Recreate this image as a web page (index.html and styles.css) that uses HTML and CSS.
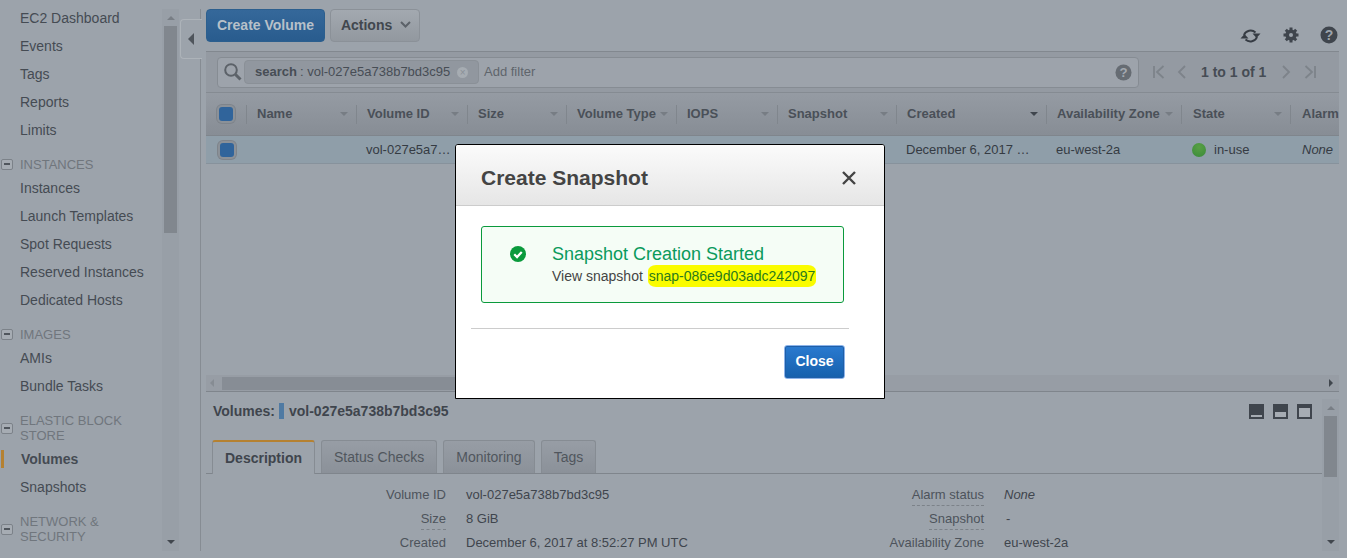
FILE: index.html
```html
<!DOCTYPE html>
<html lang="en">
<head>
<meta charset="utf-8">
<title>Volumes</title>
<link rel="stylesheet" href="styles.css">
</head>
<body>
<div class="page">
  <aside class="sidebar">
    <nav class="nav">
      <a class="item">EC2 Dashboard</a>
      <a class="item">Events</a>
      <a class="item">Tags</a>
      <a class="item">Reports</a>
      <a class="item">Limits</a>
      <div class="section"><span class="minus"></span><span class="section-label">INSTANCES</span></div>
      <a class="item">Instances</a>
      <a class="item">Launch Templates</a>
      <a class="item">Spot Requests</a>
      <a class="item">Reserved Instances</a>
      <a class="item">Dedicated Hosts</a>
      <div class="section"><span class="minus"></span><span class="section-label">IMAGES</span></div>
      <a class="item">AMIs</a>
      <a class="item">Bundle Tasks</a>
      <div class="section two"><span class="minus"></span><span class="section-label">ELASTIC BLOCK<br>STORE</span></div>
      <a class="item active">Volumes</a>
      <a class="item">Snapshots</a>
      <div class="section two"><span class="minus"></span><span class="section-label">NETWORK &amp;<br>SECURITY</span></div>
    </nav>
    <div class="vscroll side-scroll">
      <span class="arrow-up"></span>
      <span class="thumb side-thumb"></span>
      <span class="arrow-down"></span>
    </div>
    <div class="collapse-col">
      <div class="collapse-tab"><span class="arrow-left"></span></div>
    </div>
  </aside>

  <main class="main">
    <div class="toolbar">
      <button class="btn primary">Create Volume</button>
      <button class="btn secondary">Actions
        <svg class="chev" width="11" height="7" viewBox="0 0 11 7"><path d="M1 1l4.500 4.500L10 1" fill="none" stroke="#5c6269" stroke-width="2"/></svg>
      </button>
      <div class="tool-icons">
        <svg class="ic-refresh" width="21" height="16" viewBox="0 0 21 16"><path d="M4 7A7 6.500 0 0 1 15.500 4.500M17 9A7 6.500 0 0 1 5.500 11.500" fill="none" stroke="#363c44" stroke-width="2"/><path d="M12.500 5.500h8l-4 4.500zM.5 10.500h8l-4-4.500z" fill="#363c44"/></svg>
        <svg width="16" height="16" viewBox="0 0 16 16"><circle cx="8" cy="8" r="5.600" fill="#3f454d"/><path d="M8 .5v15M.5 8h15M2.800 2.800l10.400 10.400M13.200 2.800L2.800 13.200" stroke="#3f454d" stroke-width="3"/><circle cx="8" cy="8" r="2" fill="#9ca3ab"/></svg>
        <svg class="ic-help" width="18" height="18" viewBox="0 0 18 18"><circle cx="9" cy="9" r="8.500" fill="#3f454d"/><text x="9" y="14" class="q-mark">?</text></svg>
      </div>
    </div>

    <div class="table-panel">
      <div class="filter-bar">
        <div class="search">
          <svg width="20" height="20" viewBox="0 0 20 20"><circle cx="8" cy="8" r="5.800" fill="none" stroke="#5c6269" stroke-width="2"/><path d="M12.500 12.500l5 5" stroke="#5c6269" stroke-width="3"/></svg>
          <span class="token"><b>search</b> : vol-027e5a738b7bd3c95<span class="token-x">×</span></span>
          <span class="add-filter">Add filter</span>
          <svg class="search-help" width="17" height="17" viewBox="0 0 18 18"><circle cx="9" cy="9" r="8.500" fill="#666c73"/><text x="9" y="14" class="q-mark light">?</text></svg>
        </div>
        <div class="pager">
          <svg width="12" height="14" viewBox="0 0 12 14"><path d="M1 1v12M10.500 1L4 7l6.500 6" fill="none" stroke="#7d838a" stroke-width="1.800"/></svg>
          <svg class="pg-prev" width="9" height="14" viewBox="0 0 9 14"><path d="M8 1L2 7l6 6" fill="none" stroke="#7d838a" stroke-width="1.800"/></svg>
          <span class="pg-text">1 to 1 of 1</span>
          <svg class="pg-next" width="9" height="14" viewBox="0 0 9 14"><path d="M1 1l6 6-6 6" fill="none" stroke="#7d838a" stroke-width="1.800"/></svg>
          <svg width="12" height="14" viewBox="0 0 12 14"><path d="M11 1v12M1.500 1L8 7l-6.500 6" fill="none" stroke="#7d838a" stroke-width="1.800"/></svg>
        </div>
      </div>

      <div class="grid head">
        <div class="cell-check"><span class="check"></span></div>
        <div class="hcell"><span>Name</span><i class="sort"></i></div>
        <div class="hcell"><span>Volume ID</span><i class="sort"></i></div>
        <div class="hcell"><span>Size</span><i class="sort"></i></div>
        <div class="hcell"><span>Volume Type</span><i class="sort"></i></div>
        <div class="hcell"><span>IOPS</span><i class="sort"></i></div>
        <div class="hcell"><span>Snapshot</span><i class="sort"></i></div>
        <div class="hcell"><span>Created</span><i class="sort dark"></i></div>
        <div class="hcell"><span>Availability Zone</span><i class="sort"></i></div>
        <div class="hcell pad"><span>State</span><i class="sort"></i></div>
        <div class="hcell pad last"><span>Alarm</span></div>
      </div>
      <div class="grid row">
        <div class="cell-check body-check"><span class="check"></span></div>
        <div class="cell"></div>
        <div class="cell">vol-027e5a7…</div>
        <div class="cell"></div>
        <div class="cell"></div>
        <div class="cell"></div>
        <div class="cell"></div>
        <div class="cell">December 6, 2017 …</div>
        <div class="cell">eu-west-2a</div>
        <div class="cell state"><i class="dot"></i>in-use</div>
        <div class="cell em">None</div>
      </div>
      <div class="table-empty"></div>
      <div class="hscroll">
        <span class="h-left"></span>
        <span class="h-thumb"></span>
        <span class="h-right"></span>
      </div>
    </div>

    <section class="details">
      <div class="details-main">
        <div class="title-row">
          <div class="d-title"><b>Volumes:</b><i class="swatch"></i><b>vol-027e5a738b7bd3c95</b></div>
          <div class="pane-icons">
            <span class="pane p1"></span>
            <span class="pane p2"></span>
            <span class="pane p3"></span>
          </div>
        </div>
        <div class="tabs">
          <span class="tab on">Description</span>
          <span class="tab">Status Checks</span>
          <span class="tab">Monitoring</span>
          <span class="tab">Tags</span>
        </div>
        <div class="props">
          <div class="prop-col left">
            <div class="prop"><span class="k">Volume ID</span><span class="v">vol-027e5a738b7bd3c95</span></div>
            <div class="prop"><span class="k dash">Size</span><span class="v">8 GiB</span></div>
            <div class="prop"><span class="k">Created</span><span class="v">December 6, 2017 at 8:52:27 PM UTC</span></div>
          </div>
          <div class="prop-col right">
            <div class="prop"><span class="k dash">Alarm status</span><span class="v em">None</span></div>
            <div class="prop"><span class="k dash">Snapshot</span><span class="v dashv">-</span></div>
            <div class="prop"><span class="k">Availability Zone</span><span class="v">eu-west-2a</span></div>
          </div>
        </div>
      </div>
      <div class="vscroll detail-scroll">
        <span class="arrow-up"></span>
        <span class="thumb detail-thumb"></span>
        <span class="arrow-down"></span>
      </div>
    </section>
  </main>
</div>

<div class="modal">
  <header class="modal-head">
    <h2>Create Snapshot</h2>
    <svg width="16" height="16" viewBox="0 0 16 16"><path d="M2 2l12 12M14 2L2 14" stroke="#444" stroke-width="2.400"/></svg>
  </header>
  <div class="modal-body">
    <div class="alert">
      <svg class="ok" width="16" height="16" viewBox="0 0 17 17"><circle cx="8.500" cy="8.500" r="8.500" fill="#0a9a3c"/><path d="M4.500 8.800l3 2.900 5-5.400" fill="none" stroke="#fff" stroke-width="2.400"/></svg>
      <div class="alert-text">
        <div class="alert-title">Snapshot Creation Started</div>
        <div class="alert-sub">View snapshot <span class="snap">snap-086e9d03adc242097</span></div>
      </div>
    </div>
    <div class="modal-foot">
      <button class="close-btn">Close</button>
    </div>
  </div>
</div>
</body>
</html>
```
FILE: styles.css
```css
* { box-sizing: border-box; }
html, body { margin: 0; height: 100%; }
body {
  background: #9ca3ab;
  color: #3f454d;
  font: 14px/1.2 "Liberation Sans", Arial, sans-serif;
  overflow: hidden;
  position: relative;
}
.page { display: flex; height: 558px; }

/* Sidebar */
.sidebar { display: flex; width: 206px; flex: none; height: 551px; }
.nav { width: 162px; flex: none; padding-top: 4px; overflow: hidden; }
.item { display: block; height: 28px; line-height: 28px; padding-left: 20px; color: #454b53; white-space: nowrap; }
.item.active { font-weight: bold; padding-left: 21px; position: relative; }
.item.active::before { content: ""; position: absolute; left: 1px; top: 5px; width: 3px; height: 18px; background: #b58131; }
.section { display: flex; align-items: center; height: 15px; margin: 13px 0 2px; color: #70767d; font-size: 13px; line-height: 15px; }
.section.two { height: 30px; }
.section-label { padding-left: 7px; }
.minus { width: 12px; height: 11px; margin-left: 1px; border: 1px solid #7c8289; border-radius: 2px; background: #a6acb3; position: relative; flex: none; }
.minus::after { content: ""; position: absolute; left: 2px; right: 2px; top: 3px; height: 2px; background: #50565d; }

.vscroll { background: #989fa7; display: flex; flex-direction: column; align-items: center; width: 17px; flex: none; position: relative; }
.side-scroll { height: 542px; margin-top: 9px; }
.arrow-up { width: 0; height: 0; border-left: 4px solid transparent; border-right: 4px solid transparent; border-bottom: 4px solid #787e85; margin: 7px 0 6px; flex: none; }
.arrow-down { width: 0; height: 0; border-left: 4px solid transparent; border-right: 4px solid transparent; border-top: 4px solid #41474e; margin-top: auto; margin-bottom: 7px; flex: none; }
.thumb { width: 13px; background: #81878e; flex: none; }
.side-thumb { height: 207px; }

.collapse-col { width: 27px; flex: none; position: relative; padding-top: 10px; margin-top: 9px; }
.collapse-col::before { content: ""; position: absolute; left: 21px; top: 0; bottom: 0; width: 1px; background: #868c93; }
.collapse-tab { width: 22px; height: 40px; margin-left: 1px; border: 1px solid #adb3b9; border-right: 0; border-radius: 4px 0 0 4px; background: #9ca3ab; position: relative; display: flex; align-items: center; justify-content: center; }
.arrow-left { width: 0; height: 0; border-top: 6px solid transparent; border-bottom: 6px solid transparent; border-right: 6px solid #4f555c; margin-left: -2px; }

/* Main */
.main { width: 1133px; flex: none; display: flex; flex-direction: column; }
.toolbar { display: flex; align-items: flex-start; height: 51px; padding-top: 9px; gap: 5px; }
.btn { height: 33px; border-radius: 4px; font: bold 14px "Liberation Sans", Arial, sans-serif; padding: 0 0 2px; }
.primary { width: 119px; background: linear-gradient(#35689a, #295c8e); color: #b7c0c9; border: 1px solid #2c5f8e; }
.secondary { width: 90px; padding-left: 2px; background: linear-gradient(#a3a9b0, #92989f); color: #41474e; border: 1px solid #8b9198; }
.chev { margin-left: 4px; vertical-align: 2px; }
.tool-icons { margin-left: auto; display: flex; align-items: center; gap: 22px; margin-top: 16px; margin-right: 1px; }
.ic-refresh { margin-top: 3px; }
.ic-help { margin-left: -1px; }
.q-mark { font: bold 14px "Liberation Sans", Arial, sans-serif; text-anchor: middle; fill: #9ca3ab; }
.q-mark.light { fill: #a3a9b0; }

.table-panel { display: flex; flex-direction: column; height: 340px; border-top: 1px solid #82888f; }
.filter-bar { display: flex; align-items: center; height: 41px; padding-left: 11px; background: #949aa2; border-bottom: 1px solid #858b92; }
.search { width: 922px; height: 31px; border: 1px solid #868c93; border-radius: 4px; background: #9da3ab; display: flex; align-items: center; padding-left: 5px; position: relative; }
.token { display: inline-flex; align-items: center; height: 24px; width: 235px; margin-left: 1px; padding-left: 10px; background: #91979f; border: 1px solid #8a9097; border-radius: 4px; font-size: 13px; color: #474d55; white-space: nowrap; }
.token b { margin-right: 3px; }
.token-x { width: 11px; height: 11px; margin-left: 7px; border-radius: 50%; background: #a6acb2; color: #8a9097; font-size: 10px; line-height: 11px; text-align: center; flex: none; }
.add-filter { margin-left: 5px; color: #5f656c; font-size: 13px; }
.search-help { position: absolute; right: 6px; top: 6px; }
.pager { display: flex; align-items: center; margin-left: 14px; }
.pg-prev { margin-left: 12px; }
.pg-text { font-weight: bold; color: #464c54; font-size: 14px; margin: 0 16px 0 15px; white-space: nowrap; }
.pg-next { margin-right: 13px; }

.grid { display: grid; grid-template-columns: 40px 110px 111px 99px 110px 101px 119px 150px 135px 109px 49px; overflow: hidden; }
.head { height: 43px; background: linear-gradient(#959ba3, #878d95); border-bottom: 1px solid #7f858c; }
.row { height: 28px; background: #8f9ea9; border-bottom: 1px solid #87929c; font-size: 13px; color: #353b43; }
.cell-check { display: flex; justify-content: center; padding-right: 1px; align-items: center; }
.body-check { padding-right: 0; padding-left: 1px; }
.check { width: 14px; height: 14px; border-radius: 3px; background: #30649b; box-shadow: 0 0 0 2px #8b9198, 0 0 0 3px #7e848b; }
.hcell { display: flex; align-items: center; justify-content: space-between; padding: 0 8px 2px 10px; height: 19px; margin-top: 12px; border-left: 1px solid #80868d; font-weight: bold; color: #4a5058; font-size: 13px; white-space: nowrap; }
.hcell.pad { padding-left: 11px; }
.hcell.last { padding-right: 0; overflow: hidden; }
.sort { width: 0; height: 0; border-left: 4px solid transparent; border-right: 4px solid transparent; border-top: 4px solid #777d84; flex: none; }
.sort.dark { border-top-color: #3f454d; }
.cell { padding-left: 10px; line-height: 27px; white-space: nowrap; overflow: hidden; }
.cell.state { display: flex; align-items: center; padding-left: 11px; }
.dot { width: 14px; height: 14px; border-radius: 50%; background: radial-gradient(circle at 50% 30%, #58a044, #3a8a3a); margin-right: 8px; flex: none; }
.em { font-style: italic; }
.cell.em { padding-left: 12px; }
.table-empty { flex: 1; }
.hscroll { height: 16px; background: #979da5; display: flex; align-items: center; flex: none; }
.h-left { width: 0; height: 0; border-top: 4px solid transparent; border-bottom: 4px solid transparent; border-right: 4px solid #868c93; margin: 0 8px 0 4px; }
.h-thumb { width: 240px; height: 13px; background: #878d95; }
.h-right { width: 0; height: 0; border-top: 4px solid transparent; border-bottom: 4px solid transparent; border-left: 4px solid #41474e; margin-left: auto; margin-right: 6px; }

.details { display: flex; flex: 1; border-top: 1px solid #7f858c; min-height: 0; }
.details-main { flex: 1; min-width: 0; display: flex; flex-direction: column; }
.title-row { display: flex; justify-content: space-between; align-items: center; height: 39px; padding: 0 10px 0 7px; }
.d-title { display: flex; align-items: center; color: #3f454d; font-size: 14px; }
.swatch { width: 5px; height: 16px; background: #4f7aa3; margin: 0 5px 0 4px; }
.pane-icons { display: flex; gap: 9px; margin-top: -1px; }
.pane { width: 15px; height: 15px; background: #3f454d; position: relative; }
.pane::after { content: ""; position: absolute; left: 2px; right: 2px; background: #a6acb3; }
.p1::after { height: 2px; bottom: 2px; }
.p2::after { height: 5px; bottom: 2px; }
.p3::after { height: 9px; bottom: 2px; }

.tabs { display: flex; height: 34px; margin-top: 9px; gap: 6px; padding-left: 6px; border-bottom: 1px solid #7f858c; flex: none; }
.tab { height: 33px; padding: 0 12px; line-height: 33px; background: linear-gradient(#979da5, #8b9199); border: 1px solid #868c93; border-bottom: 0; border-radius: 3px 3px 0 0; color: #50565d; }
.tab.on { height: 34px; background: #9ca3ab; border-top: 2px solid #b58131; font-weight: bold; color: #3f454d; }

.props { display: flex; padding-top: 11px; }
.prop-col { display: flex; flex-direction: column; }
.prop-col.left { width: 670px; }
.prop-col.right { width: 248px; }
.prop { display: flex; height: 24px; line-height: 20px; font-size: 13px; white-space: nowrap; }
.k { color: #4d535b; height: 21px; margin-left: auto; }
.prop-col.left .v { width: 430px; padding-left: 20px; flex: none; }
.prop-col.right .v { flex: 0 0 140px; padding-left: 20px; }
.k.dash { border-bottom: 1px dashed #7c8289; }
.v { color: #3f454d; }
.prop-col.right .v.dashv { padding-left: 22px; }
.detail-scroll { margin-top: 7px; height: 152px; }
.detail-thumb { height: 61px; }

/* Modal */
.modal { position: absolute; left: 455px; top: 144px; width: 430px; height: 255px; background: #fff; border: 1px solid #000; border-radius: 3px 3px 0 0; overflow: hidden; }
.modal-head { height: 61px; display: flex; align-items: center; justify-content: space-between; padding: 6px 27px 0 25px; background: linear-gradient(#fbfbfb, #e6e6e6); border-bottom: 1px solid #ccc; }
.modal-head h2 { margin: 0; font-size: 21px; font-weight: bold; color: #444; }
.modal-body { padding: 20px 15px 0; }
.alert { margin-left: 10px; width: 363px; height: 77px; border: 1px solid #0a9a3c; border-radius: 3px; background: #f5fdf6; display: flex; padding: 17px 0 0 28px; }
.ok { flex: none; margin-top: 2px; }
.alert-text { margin-left: 26px; }
.alert-title { color: #0a9a5c; font-size: 18px; line-height: 20px; }
.alert-sub { color: #444; font-size: 14px; line-height: 20px; margin-top: 2px; }
.snap { background: #fafc00; color: #2a7a1c; border-radius: 8px / 6px; padding: 3px 1px; margin-left: 1px; }
.modal-foot { margin-top: 25px; width: 378px; border-top: 1px solid #ccc; display: flex; justify-content: flex-end; padding-top: 16px; }
.close-btn { width: 61px; height: 34px; margin-right: 4px; padding: 0 0 2px; background: linear-gradient(#2a7ad0, #1560ac); color: #fff; border: 1px solid #8cb4ea; border-radius: 3px; font: bold 14px "Liberation Sans", Arial, sans-serif; box-shadow: inset 0 0 0 1px #1f5fa8; }
```
